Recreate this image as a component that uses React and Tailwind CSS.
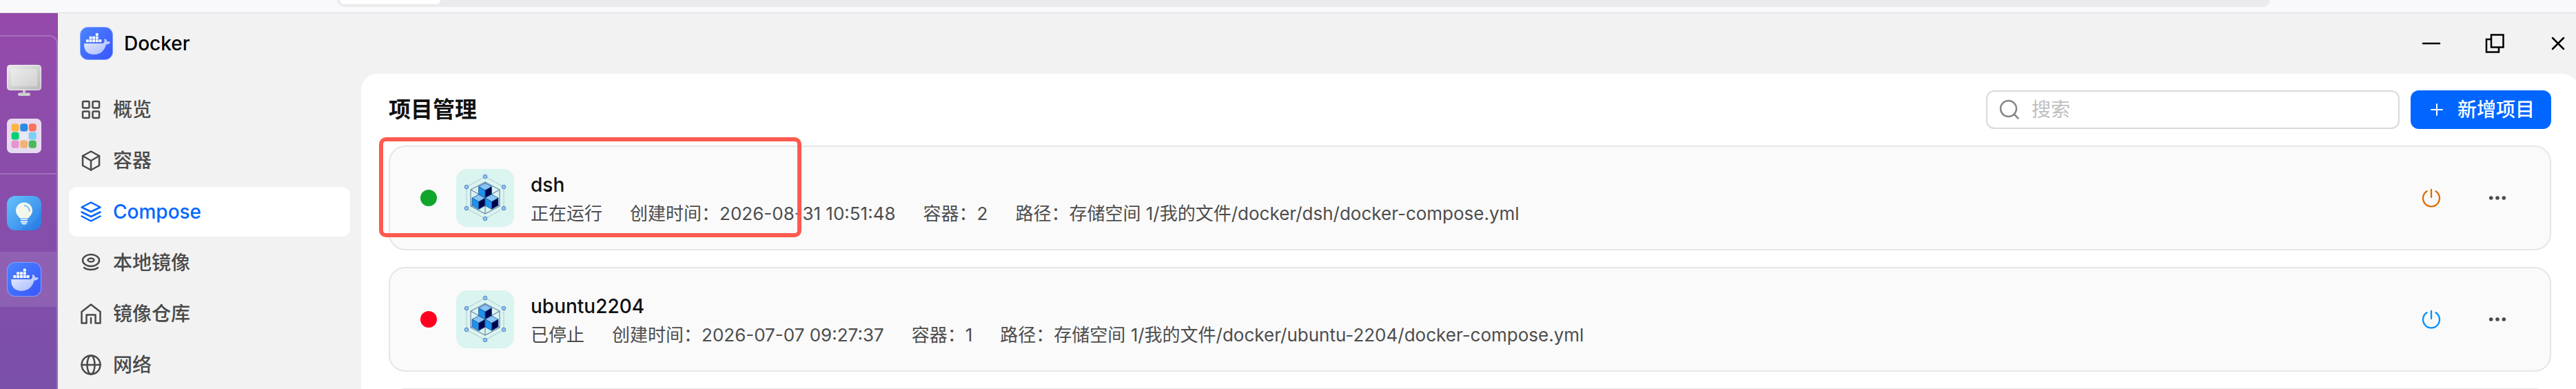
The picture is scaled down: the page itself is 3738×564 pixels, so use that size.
import React, { useState } from "react";

// Blue tile with the whale, used in the dock and in the title bar
function DockerLogo({ id, className }) {
  return (
    <svg viewBox="0 0 48 48" className={className} aria-hidden="true">
      <defs>
        <linearGradient id={`${id}-bg`} x1="0" y1="0" x2="1" y2="1">
          <stop offset="0" stopColor="#4a84ff" />
          <stop offset="1" stopColor="#3a55fb" />
        </linearGradient>
        <linearGradient id={`${id}-body`} x1="0" y1="0" x2="1" y2="1">
          <stop offset="0" stopColor="#ffffff" stopOpacity="0.85" />
          <stop offset="1" stopColor="#ffffff" stopOpacity="0.55" />
        </linearGradient>
      </defs>
      <rect x="0.5" y="0.5" width="47" height="47" rx="11" fill={`url(#${id}-bg)`} stroke="#7ea2ff" strokeWidth="1" />
      <path
        d="M6 24H32.500C35 23.500 36 22 35.500 19.500C35 17 36.500 16.500 38 18.500C38.800 19.800 39 21 40 21.500C42 21 43.500 21.500 44 22.500C43 24.500 41 25.500 38 25.500C36 33 31 40 21 40C10 40 5.500 34 6 24Z"
        fill={`url(#${id}-body)`}
      />
      <g fill="#ffffff">
        <rect x="9" y="18.300" width="3.800" height="3.800" />
        <rect x="13.600" y="18.300" width="3.800" height="3.800" />
        <rect x="18.200" y="18.300" width="3.800" height="3.800" />
        <rect x="22.800" y="18.300" width="3.800" height="3.800" />
        <rect x="27.400" y="18.300" width="3.800" height="3.800" />
        <rect x="13.600" y="13.800" width="3.800" height="3.800" />
        <rect x="18.200" y="13.800" width="3.800" height="3.800" />
        <rect x="22.800" y="13.800" width="3.800" height="3.800" />
        <rect x="22.800" y="9.200" width="3.800" height="3.800" />
      </g>
    </svg>
  );
}

function MonitorIcon() {
  return (
    <svg viewBox="0 0 50 50" className="size-[50px]" aria-hidden="true">
      <defs>
        <linearGradient id="monitor" x1="0" y1="0" x2="1" y2="1">
          <stop offset="0" stopColor="#ececec" />
          <stop offset="1" stopColor="#b9b9b9" />
        </linearGradient>
      </defs>
      <path d="M23 38H27V43H23Z" fill="#c4c4c4" />
      <rect x="16" y="42.500" width="18" height="4.500" rx="2.200" fill="#cfcfcf" />
      <rect x="0.500" y="2.500" width="49" height="36" rx="4" fill="url(#monitor)" stroke="#efefef" />
      <rect x="6" y="8" width="38" height="25" rx="1.500" fill="#ffffff" fillOpacity="0.28" />
    </svg>
  );
}

const appTiles = [
  ["#ffb340", "#2b8ae0", "#fa735a"],
  ["#07cf73", "#e6ecf6", "#7bd0f7"],
  ["#e594cf", "#efb473", "#4bb857"],
];

function AppsIcon() {
  return (
    <svg viewBox="0 0 50 50" className="size-[50px]" aria-hidden="true">
      <rect width="50" height="50" rx="7" fill="#e7dcef" />
      {appTiles.map((row, r) =>
        row.map((fill, c) => (
          <rect key={fill} x={6.6 + c * 12.6} y={7.2 + r * 12.2} width="11" height="11.200" rx="3.600" fill={fill} />
        ))
      )}
    </svg>
  );
}

function BulbIcon() {
  return (
    <svg viewBox="0 0 50 50" className="size-[50px]" aria-hidden="true">
      <defs>
        <linearGradient id="bulb" x1="0" y1="0" x2="1" y2="1">
          <stop offset="0" stopColor="#66c2fd" />
          <stop offset="1" stopColor="#2a7de6" />
        </linearGradient>
      </defs>
      <rect width="50" height="50" rx="12" fill="url(#bulb)" />
      <path d="M50 16C48 31 38 42 22 46L18 50H38A12 12 0 0 0 50 38Z" fill="#1f6fe0" fillOpacity="0.2" />
      <path d="M25 9.500C18 9.500 13 15 13 21.500C13 27 17 29.500 19 32.500H31C33 29.500 37 27 37 21.500C37 15 32 9.500 25 9.500Z" fill="#f2f7ee" />
      <path d="M25 14C29.500 14 32.500 17.500 32.800 22.500" fill="none" stroke="#58abf5" strokeWidth="1.500" />
      <path d="M20 33.500H30V35H20ZM20 36.500H30V38.500H20ZM21 39.500H29C29 42 21 42 21 39.500Z" fill="#f8fbff" />
    </svg>
  );
}

// Line icons of the sidebar, all on a 32px grid
const navIcons = {
  overview: (
    <>
      <rect x="4" y="4" width="9.500" height="9.500" rx="1.500" />
      <rect x="18.500" y="4" width="9.500" height="9.500" rx="1.500" />
      <rect x="4" y="18.500" width="9.500" height="9.500" rx="1.500" />
      <rect x="18.500" y="18.500" width="9.500" height="9.500" rx="1.500" />
    </>
  ),
  container: (
    <>
      <path d="M16 2.500L28 9V23L16 29.500L4 23V9Z" />
      <path d="M4 9L16 16L28 9M16 16V29.500" />
    </>
  ),
  compose: (
    <>
      <path d="M16 2.500L29.500 9.500L16 16L2.500 9.500Z" />
      <path d="M2.500 16.500L16 23L29.500 16.500" />
      <path d="M2.500 22.500L16 29.500L29.500 22.500" />
    </>
  ),
  image: (
    <>
      <ellipse cx="16" cy="12.500" rx="12" ry="8.500" />
      <ellipse cx="16" cy="12" rx="4.500" ry="2.500" />
      <path d="M6 23C11 27 21 27 26 23" />
    </>
  ),
  registry: (
    <>
      <path d="M2.500 29.500V13L16 2.500L29.500 13V29.500H22.500V17.500H9.500V29.500Z" />
      <path d="M16 22V29.500" />
    </>
  ),
  network: (
    <>
      <circle cx="16" cy="16" r="13.500" />
      <ellipse cx="16" cy="16" rx="5.500" ry="13.500" />
      <path d="M2.500 16H29.500" />
    </>
  ),
};

const navItems = [
  { key: "overview", label: "概览" },
  { key: "container", label: "容器" },
  { key: "compose", label: "Compose" },
  { key: "image", label: "本地镜像" },
  { key: "registry", label: "镜像仓库" },
  { key: "network", label: "网络" },
];

const projects = [
  {
    name: "dsh",
    running: true,
    created: "2026-08-31 10:51:48",
    containers: 2,
    path: "存储空间 1/我的文件/docker/dsh/docker-compose.yml",
    marked: true,
  },
  {
    name: "ubuntu2204",
    running: false,
    created: "2026-07-07 09:27:37",
    containers: 1,
    path: "存储空间 1/我的文件/docker/ubuntu-2204/docker-compose.yml",
  },
];

// One isometric cube, (x, y) is the back corner of its top face
function Cube({ x, y }) {
  return (
    <g transform={`translate(${x} ${y})`} stroke="#1c5a96" strokeWidth="0.800" strokeLinejoin="round">
      <path d="M0 0L9.500 5L0 10.500L-9.500 5Z" fill="#8ac4f5" />
      <path d="M-9.500 5L0 10.500V21.500L-9.500 16Z" fill="#2090ee" />
      <path d="M9.500 5L0 10.500V21.500L9.500 16Z" fill="#00044d" />
    </g>
  );
}

function ProjectIcon() {
  const nodes = [[42, 11], [69, 26], [69, 57], [42, 72], [15, 57], [15, 26]];
  return (
    <svg viewBox="0 0 84 84" className="size-[84px] shrink-0" aria-hidden="true">
      <rect width="84" height="84" rx="16" fill="#daf4f0" />
      <path d="M42 11L69 26V57L42 72L15 57V26Z" fill="none" stroke="#a9c0cf" strokeWidth="1.200" strokeDasharray="2 1" />
      <path d="M42 19L63 30V54L42 65L21 54V30ZM21 30L42 42L63 30M42 42V65M21 54L42 42L63 54M42 19V42" fill="none" stroke="#7387a8" strokeWidth="1.200" />
      <Cube x={42} y={20.5} />
      <Cube x={32.5} y={37} />
      <Cube x={51.5} y={37} />
      {nodes.map(([cx, cy]) => (
        <circle key={`${cx}-${cy}`} cx={cx} cy={cy} r="2.800" fill="#8cc6f8" stroke="#587fb8" strokeWidth="1" />
      ))}
    </svg>
  );
}

function ProjectCard({ project }) {
  return (
    <li className="relative flex h-[152px] items-center rounded-3xl border-2 border-[#e6e6e6] bg-[#fafafa] pr-[60px] pl-11">
      {project.marked && (
        <div className="pointer-events-none absolute -top-[14px] -left-4 h-[145px] w-[613px] rounded-[10px] border-6 border-[#ff5a4f]" />
      )}
      <span className={project.running ? "size-6 rounded-full bg-[#12a52b]" : "size-6 rounded-full bg-[#ff001f]"} />
      <div className="ml-7">
        <ProjectIcon />
      </div>
      <div className="ml-6 min-w-0 flex-1 pt-1">
        <h2 className="text-[28px] leading-[42px] font-medium text-[#111111]">{project.name}</h2>
        <div className="flex gap-10 text-[26px] leading-[42px] whitespace-nowrap text-[#4d4d4d]">
          <span>{project.running ? "正在运行" : "已停止"}</span>
          <span>创建时间：{project.created}</span>
          <span>容器：{project.containers}</span>
          <span>路径：{project.path}</span>
        </div>
      </div>
      <div className="flex gap-16">
        <button aria-label="电源" className={project.running ? "text-[#e06c00]" : "text-[#0090ff]"}>
          <svg viewBox="0 0 32 32" className="size-8" fill="none" stroke="currentColor" strokeWidth="2.300" strokeLinecap="round">
            <path d="M9.500 6.200A12 12 0 1 0 22.500 6.200M16 4V15" />
          </svg>
        </button>
        <button aria-label="更多" className="text-[#4a4a4a]">
          <svg viewBox="0 0 32 32" className="size-8" fill="currentColor">
            <circle cx="6.700" cy="16" r="2.800" />
            <circle cx="16" cy="16" r="2.800" />
            <circle cx="25.300" cy="16" r="2.800" />
          </svg>
        </button>
      </div>
    </li>
  );
}

export default function App() {
  const [active, setActive] = useState("compose");
  const [keyword, setKeyword] = useState("");

  return (
    <div className="flex h-screen flex-col overflow-hidden bg-[#f2f2f2] font-['Inter','Noto_Sans_CJK_SC',sans-serif] text-[#111111]">
      {/* Browser bar */}
      <div className="h-[19px] shrink-0 border-b border-[#dcdce0] bg-[#f9f9fc] pr-[444px] pl-[489px]">
        <div className="h-[10px] rounded-b-2xl bg-[#ebebee] pb-1 pl-1">
          <div className="h-[6px] w-[146px] rounded-b-xl bg-white" />
        </div>
      </div>

      <div className="flex min-h-0 flex-1">
        {/* Desktop dock */}
        <aside className="flex w-[84px] shrink-0 flex-col bg-linear-to-b from-[#954aab] to-[#7a50a9] pt-8">
          <div className="flex flex-1 flex-col rounded-tr-xl border-t-2 border-r-2 border-white/20">
            <div className="flex h-[200px] flex-col gap-[30px] border-b-2 border-white/20 pt-[39px] pl-[10px]">
              <MonitorIcon />
              <AppsIcon />
            </div>
            <div className="pt-[31px] pb-[31px] pl-[10px]">
              <BulbIcon />
            </div>
            <div className="flex h-20 items-center bg-white/10 pl-[10px]">
              <DockerLogo id="dock" className="size-[50px]" />
            </div>
          </div>
        </aside>

        {/* Docker window */}
        <div className="flex min-w-0 flex-1 flex-col">
          <header className="flex h-[88px] shrink-0 items-center justify-between pr-2.5 pl-8">
            <div className="flex items-center gap-4">
              <DockerLogo id="title" className="size-12" />
              <span className="text-[28px] leading-10 font-medium text-black">Docker</span>
            </div>
            <div className="flex gap-[60px] text-black">
              <button aria-label="最小化">
                <svg viewBox="0 0 32 32" className="size-8" fill="none" stroke="currentColor" strokeWidth="2.500" strokeLinecap="round">
                  <path d="M4 16H28" />
                </svg>
              </button>
              <button aria-label="还原">
                <svg viewBox="0 0 32 32" className="size-8" fill="none" stroke="currentColor" strokeWidth="2.500">
                  <path d="M11 3.500H28.500V21.500H11ZM11 10H4V28.500H22V21.500" />
                </svg>
              </button>
              <button aria-label="关闭">
                <svg viewBox="0 0 32 32" className="size-8" fill="none" stroke="currentColor" strokeWidth="2.500" strokeLinecap="round">
                  <path d="M8 8L24 24M24 8L8 24" />
                </svg>
              </button>
            </div>
          </header>

          <div className="flex min-h-0 flex-1">
            <nav className="flex w-[440px] shrink-0 flex-col gap-0.5 pt-4 pr-4 pl-4">
              {navItems.map((item) => (
                <button
                  key={item.key}
                  onClick={() => setActive(item.key)}
                  className={
                    active === item.key
                      ? "flex h-[72px] shrink-0 items-center gap-4 rounded-xl bg-white pl-4 text-[28px] font-medium text-[#0066ff]"
                      : "flex h-[72px] shrink-0 items-center gap-4 rounded-xl pl-4 text-[28px] font-medium text-[#4a4a4a]"
                  }
                >
                  <svg viewBox="0 0 32 32" className="size-8" fill="none" stroke="currentColor" strokeWidth="2.500" strokeLinejoin="round" strokeLinecap="round">
                    {navIcons[item.key]}
                  </svg>
                  {item.label}
                </button>
              ))}
            </nav>

            <main className="-mr-1 min-w-0 flex-1 rounded-t-3xl bg-white px-10 pt-6">
              <div className="flex items-center">
                <h1 className="flex-1 text-[32px] leading-[56px] font-semibold">项目管理</h1>
                <label className="flex h-14 w-[600px] items-center rounded-xl border-2 border-[#d9d9d9] bg-white px-4">
                  <svg viewBox="0 0 32 32" className="size-8" fill="none" stroke="#888888" strokeWidth="2.500" strokeLinecap="round">
                    <circle cx="14.500" cy="14.500" r="11.500" />
                    <path d="M23 23L28.500 28.500" />
                  </svg>
                  <input
                    value={keyword}
                    onChange={(e) => setKeyword(e.target.value)}
                    placeholder="搜索"
                    aria-label="搜索"
                    className="ml-4 min-w-0 flex-1 text-[28px] leading-10 outline-none placeholder:text-[#bfbfbf]"
                  />
                </label>
                <button className="ml-4 flex h-14 items-center gap-4 rounded-xl bg-[#0066ff] px-6 text-[28px] leading-10 font-medium text-white">
                  <svg viewBox="0 0 28 28" className="size-7" fill="none" stroke="currentColor" strokeWidth="2" strokeLinecap="round">
                    <path d="M6 14H22M14 6V22" />
                  </svg>
                  新增项目
                </button>
              </div>

              <ul className="mt-6 flex flex-col gap-6">
                {projects.map((project) => (
                  <ProjectCard key={project.name} project={project} />
                ))}
                {/* Next row, scrolled out of view */}
                <li className="h-[152px] rounded-3xl border-2 border-[#e6e6e6] bg-[#fafafa]" />
              </ul>
            </main>
          </div>
        </div>
      </div>
    </div>
  );
}
